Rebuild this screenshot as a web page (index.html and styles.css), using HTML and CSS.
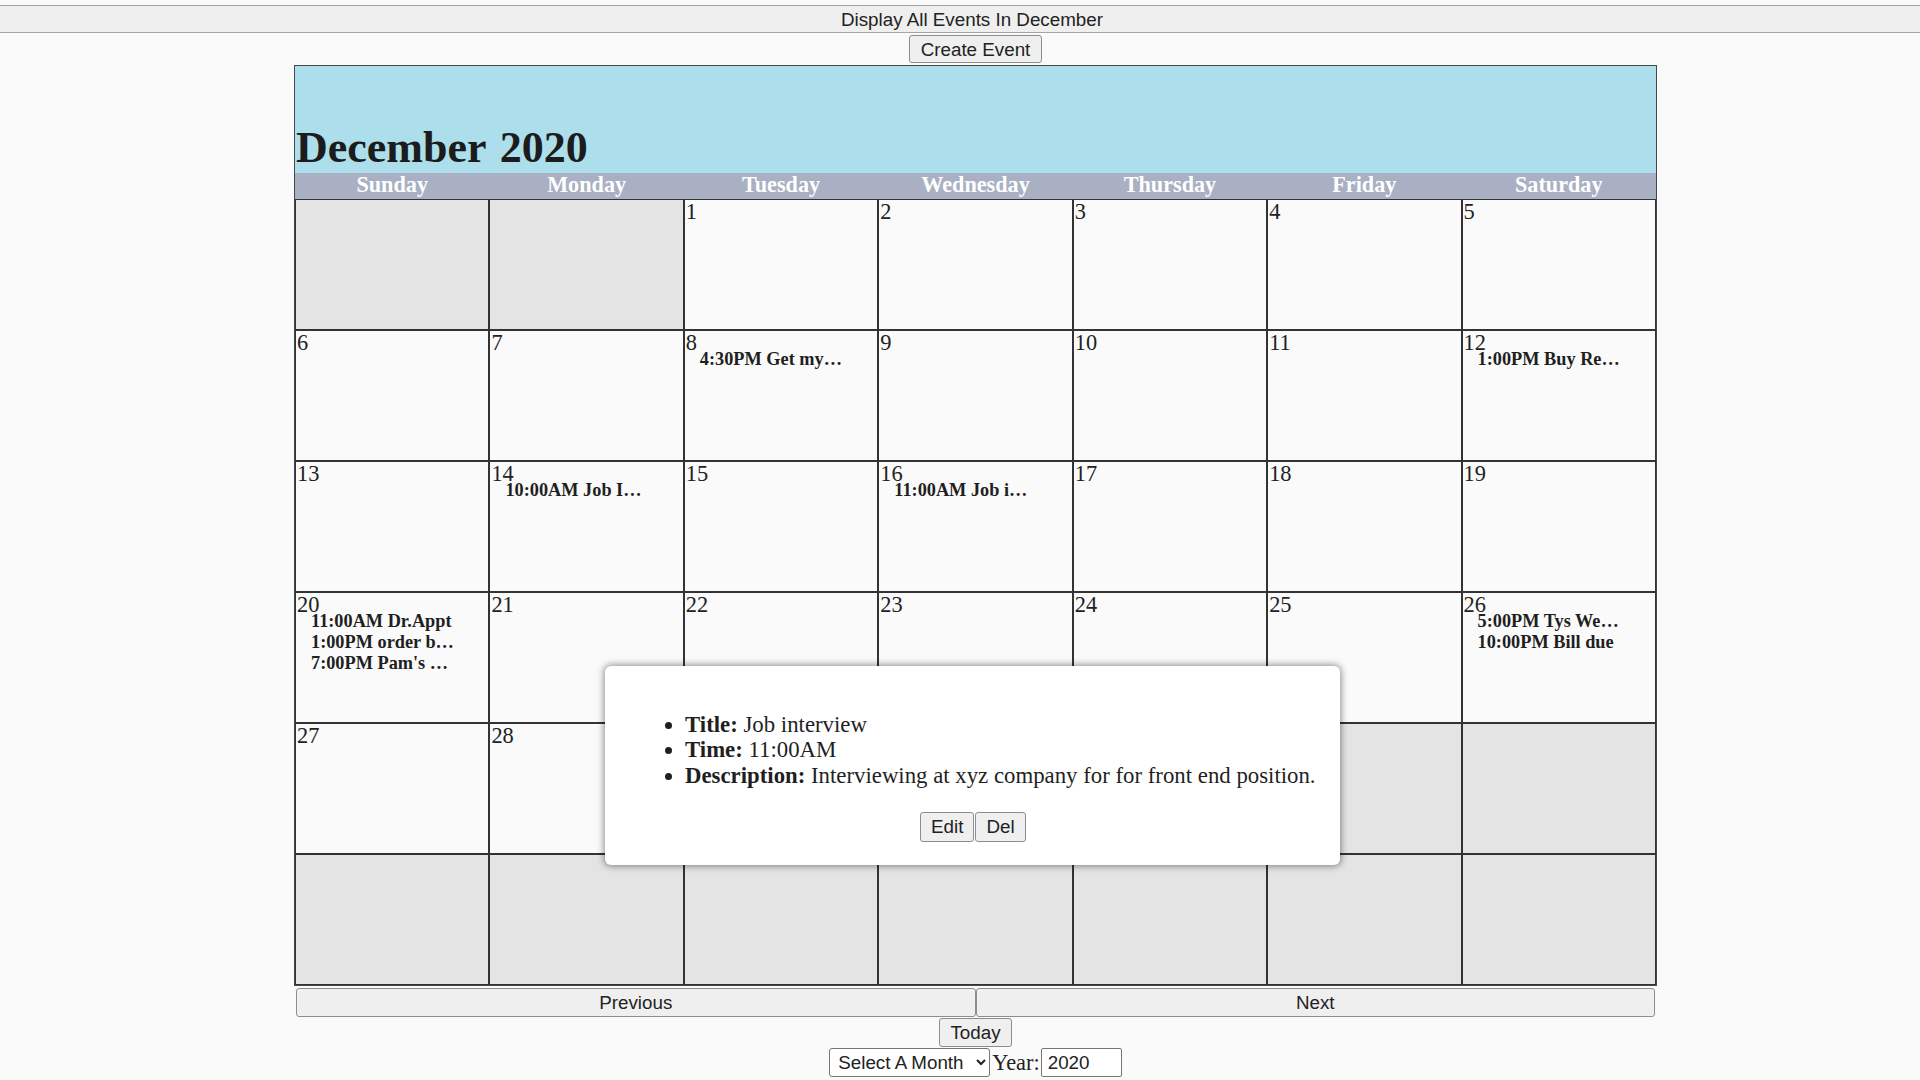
FILE: index.html
```html
<!DOCTYPE html>
<html lang="en">
<head>
<meta charset="utf-8">
<title>Calendar</title>
<link rel="stylesheet" href="styles.css">
</head>
<body>
<button class="all-events">Display All Events In December</button>
<div class="page">
  <button class="btn create">Create Event</button>
  <div class="calendar">
    <div class="cal-title"><h1>December 2020</h1></div>
    <div class="weekdays">
      <div>Sunday</div><div>Monday</div><div>Tuesday</div><div>Wednesday</div><div>Thursday</div><div>Friday</div><div>Saturday</div>
    </div>
    <div class="grid">
      <div class="cell off"></div>
      <div class="cell off"></div>
      <div class="cell"><span class="num">1</span></div>
      <div class="cell"><span class="num">2</span></div>
      <div class="cell"><span class="num">3</span></div>
      <div class="cell"><span class="num">4</span></div>
      <div class="cell"><span class="num">5</span></div>

      <div class="cell"><span class="num">6</span></div>
      <div class="cell"><span class="num">7</span></div>
      <div class="cell"><span class="num">8</span><ul class="events"><li>4:30PM Get my…</li></ul></div>
      <div class="cell"><span class="num">9</span></div>
      <div class="cell"><span class="num">10</span></div>
      <div class="cell"><span class="num">11</span></div>
      <div class="cell"><span class="num">12</span><ul class="events"><li>1:00PM Buy Re…</li></ul></div>

      <div class="cell"><span class="num">13</span></div>
      <div class="cell"><span class="num">14</span><ul class="events"><li>10:00AM Job I…</li></ul></div>
      <div class="cell"><span class="num">15</span></div>
      <div class="cell"><span class="num">16</span><ul class="events"><li>11:00AM Job i…</li></ul></div>
      <div class="cell"><span class="num">17</span></div>
      <div class="cell"><span class="num">18</span></div>
      <div class="cell"><span class="num">19</span></div>

      <div class="cell"><span class="num">20</span><ul class="events"><li>11:00AM Dr.Appt</li><li>1:00PM order b…</li><li>7:00PM Pam's …</li></ul></div>
      <div class="cell"><span class="num">21</span></div>
      <div class="cell"><span class="num">22</span></div>
      <div class="cell"><span class="num">23</span></div>
      <div class="cell"><span class="num">24</span></div>
      <div class="cell"><span class="num">25</span></div>
      <div class="cell"><span class="num">26</span><ul class="events"><li>5:00PM Tys We…</li><li>10:00PM Bill due</li></ul></div>

      <div class="cell"><span class="num">27</span></div>
      <div class="cell"><span class="num">28</span></div>
      <div class="cell"><span class="num">29</span></div>
      <div class="cell"><span class="num">30</span></div>
      <div class="cell"><span class="num">31</span></div>
      <div class="cell off"></div>
      <div class="cell off"></div>

      <div class="cell off"></div>
      <div class="cell off"></div>
      <div class="cell off"></div>
      <div class="cell off"></div>
      <div class="cell off"></div>
      <div class="cell off"></div>
      <div class="cell off"></div>
    </div>
  </div>
  <div class="nav">
    <button class="btn nav-btn">Previous</button>
    <button class="btn nav-btn">Next</button>
  </div>
  <button class="btn today">Today</button>
  <div class="picker">
    <select class="month">
      <option>Select A Month</option>
      <option>January</option>
      <option>February</option>
      <option>March</option>
      <option>April</option>
      <option>May</option>
      <option>June</option>
      <option>July</option>
      <option>August</option>
      <option>September</option>
      <option>October</option>
      <option>November</option>
      <option>December</option>
    </select>
    <label class="year-label" for="year">Year:</label>
    <input class="year" id="year" type="text" value="2020">
  </div>
</div>

<div class="popup">
  <ul class="details">
    <li><b>Title:</b> Job interview</li>
    <li><b>Time:</b> 11:00AM</li>
    <li><b>Description:</b> Interviewing at xyz company for for front end position.</li>
  </ul>
  <div class="popup-actions">
    <button class="btn small">Edit</button>
    <button class="btn small">Del</button>
  </div>
</div>
</body>
</html>
```

FILE: styles.css
```css
html, body {
  margin: 0;
  padding: 0;
}

body {
  background: #fafafa;
  color: #222;
  font-family: "Liberation Serif", "Times New Roman", serif;
  font-size: 22.4px;
  position: relative;
  min-height: 1080px;
}

button, select, input {
  font-family: "Liberation Sans", Arial, sans-serif;
  font-size: 18.8px;
  color: #222;
}

.all-events {
  display: block;
  width: 100%;
  height: 28px;
  margin: 5px 0 0;
  padding: 0 0 0 24px;
  background: #efefef;
  border: none;
  border-top: 1px solid #a5a5a5;
  border-bottom: 1px solid #a5a5a5;
  line-height: 27px;
  text-align: center;
}

.page {
  padding-left: 31px;
  display: flex;
  flex-direction: column;
  align-items: center;
}

.btn {
  background: #efefef;
  border: 1px solid #8d8d8d;
  border-radius: 3px;
  padding: 0 10px;
  line-height: 26px;
  height: 29px;
}

.create {
  margin-top: 2px;
  height: 28px;
  padding: 0 11px;
  line-height: 27px;
}

.calendar {
  width: 1363px;
  box-sizing: border-box;
  margin-top: 2px;
  border: 1px solid #474747;
}

.cal-title {
  height: 107px;
  background: #acdfeb;
  display: flex;
  align-items: flex-end;
}

.cal-title h1 {
  margin: 0 0 0 1px;
  font-size: 44px;
  font-weight: bold;
  line-height: normal;
  color: #1c1c1c;
  word-spacing: 3px;
}

.weekdays {
  display: grid;
  grid-template-columns: repeat(7, 1fr);
  height: 26px;
  background: #a9b0c3;
  color: #fff;
  font-weight: bold;
  font-size: 22.2px;
  line-height: 24px;
  text-align: center;
}

.grid {
  display: grid;
  grid-template-columns: repeat(7, 1fr);
  grid-auto-rows: 131px;
}

.cell {
  border: 1px solid #333;
  background: #fafafa;
  padding: 1px 1px;
  overflow: hidden;
}

.cell.off {
  background: #e4e4e4;
}

.num {
  display: block;
  height: 17px;
  line-height: 22px;
  font-size: 22.4px;
  color: #222;
}

.events {
  list-style: none;
  margin: 0;
  padding: 0 0 0 14px;
  font-size: 18.3px;
  font-weight: bold;
  line-height: 21px;
  color: #1f1f1f;
  white-space: nowrap;
}

.nav {
  display: flex;
  width: 1359px;
  margin-top: 2px;
}

.nav-btn {
  flex: 1;
  height: 29px;
}

.today {
  margin-top: 1px;
}

.picker {
  display: flex;
  align-items: center;
  margin-top: 1px;
}

.month {
  width: 161px;
  height: 29px;
  padding: 0 2px 0 4px;
  background: #fff;
  border: 1px solid #767676;
  border-radius: 3px;
}

.year-label {
  font-size: 22.4px;
  color: #222;
  padding: 0 1px 0 2px;
  line-height: 29px;
}

.year {
  width: 81px;
  height: 29px;
  box-sizing: border-box;
  padding: 0 6px;
  background: #fff;
  border: 1px solid #767676;
  border-radius: 2px;
}

.popup {
  position: absolute;
  left: 605px;
  top: 666px;
  background: #fff;
  border-radius: 6px;
  box-shadow: 0 0 7px 1px rgba(0, 0, 0, 0.45);
  padding: 24px 24px 23px 25px;
}

.details {
  margin: 22px 0 24px;
  padding-left: 55px;
  font-size: 22.8px;
  line-height: 25.3px;
  color: #1f1f1f;
}

.popup-actions {
  display: flex;
  justify-content: center;
  gap: 1px;
}

.small {
  height: 30px;
}
```
